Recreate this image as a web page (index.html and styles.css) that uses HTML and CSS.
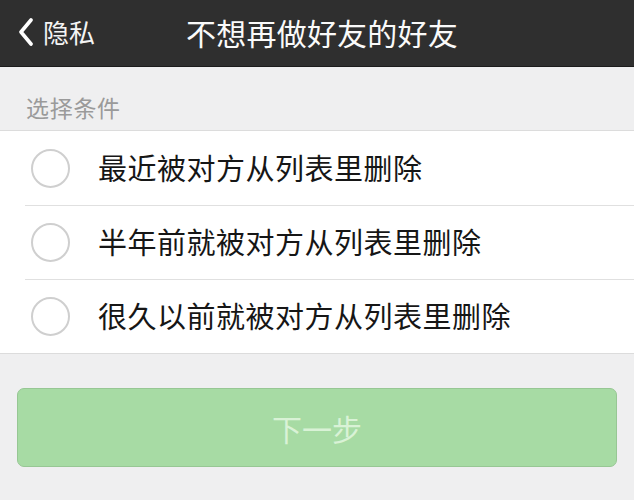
FILE: index.html
```html
<!DOCTYPE html>
<html lang="zh-CN">
<head>
<meta charset="utf-8">
<link rel="stylesheet" href="styles.css">
</head>
<body>
<header class="topbar">
  <div class="back">
    <svg class="chev" width="16" height="28" viewBox="0 0 16 28"><path d="M13 2 L3 14 L13 26" fill="none" stroke="#fff" stroke-width="3.6" stroke-linecap="round" stroke-linejoin="round"/></svg>
    <span class="back-text">隐私</span>
  </div>
  <div class="title">不想再做好友的好友</div>
  <div class="spacer"></div>
</header>
<div class="section-label">选择条件</div>
<ul class="options">
  <li class="option"><span class="radio"></span><span class="opt-text">最近被对方从列表里删除</span></li>
  <li class="option"><span class="radio"></span><span class="opt-text">半年前就被对方从列表里删除</span></li>
  <li class="option"><span class="radio"></span><span class="opt-text">很久以前就被对方从列表里删除</span></li>
</ul>
<div class="actions">
  <button class="next-btn">下一步</button>
</div>
</body>
</html>
```

FILE: styles.css
```css
* { box-sizing: border-box; }
html, body { margin: 0; padding: 0; }
body {
  width: 634px;
  height: 500px;
  background: #efeff0;
  font-family: "Noto Sans CJK SC", "Noto Sans", sans-serif;
  overflow: hidden;
}
.topbar {
  height: 67px;
  background: #2f2f2f;
  border-bottom: 1px solid #1c1c1c;
  display: grid;
  grid-template-columns: 1fr auto 1fr;
  align-items: center;
  padding: 0 0 0 18px;
  color: #fff;
}
.back {
  display: flex;
  align-items: center;
  gap: 9px;
}
.chev { display: block; margin-top: -2px; }
.back-text {
  font-size: 26px;
  line-height: 1;
  color: #f4f4f4;
  margin-top: -2px;
}
.title {
  font-size: 30px;
  line-height: 1;
  color: #fafafa;
  margin-top: -2px;
  margin-left: -8px;
  letter-spacing: 0.2px;
}
.section-label {
  height: 63px;
  padding: 29px 0 0 26px;
  font-size: 23px;
  line-height: 1;
  color: #9a9a9a;
  letter-spacing: 0.7px;
}
.options {
  list-style: none;
  margin: 0;
  padding: 0;
  background: #fff;
  border-top: 1px solid #dcdcdc;
  border-bottom: 1px solid #dcdcdc;
}
.option {
  height: 74px;
  display: flex;
  align-items: center;
  padding-left: 31px;
  position: relative;
}
.option + .option::before {
  content: "";
  position: absolute;
  left: 25px;
  right: 0;
  top: 0;
  border-top: 1px solid #e0e0e0;
}
.radio {
  width: 39px;
  height: 39px;
  border-radius: 50%;
  border: 2px solid #cfcfcf;
  flex: none;
}
.opt-text {
  margin-left: 28px;
  font-size: 29px;
  line-height: 1;
  color: #161616;
  margin-top: -2px;
  letter-spacing: 0.5px;
}
.actions {
  padding: 34px 17px 0 17px;
}
.next-btn {
  width: 600px;
  height: 79px;
  border: 1px solid #97c794;
  border-radius: 7px;
  background: #a7dba4;
  color: #d9f2d6;
  font-family: "Noto Sans CJK SC", "Noto Sans", sans-serif;
  font-size: 30px;
  line-height: 1;
  padding: 0;
}
```
